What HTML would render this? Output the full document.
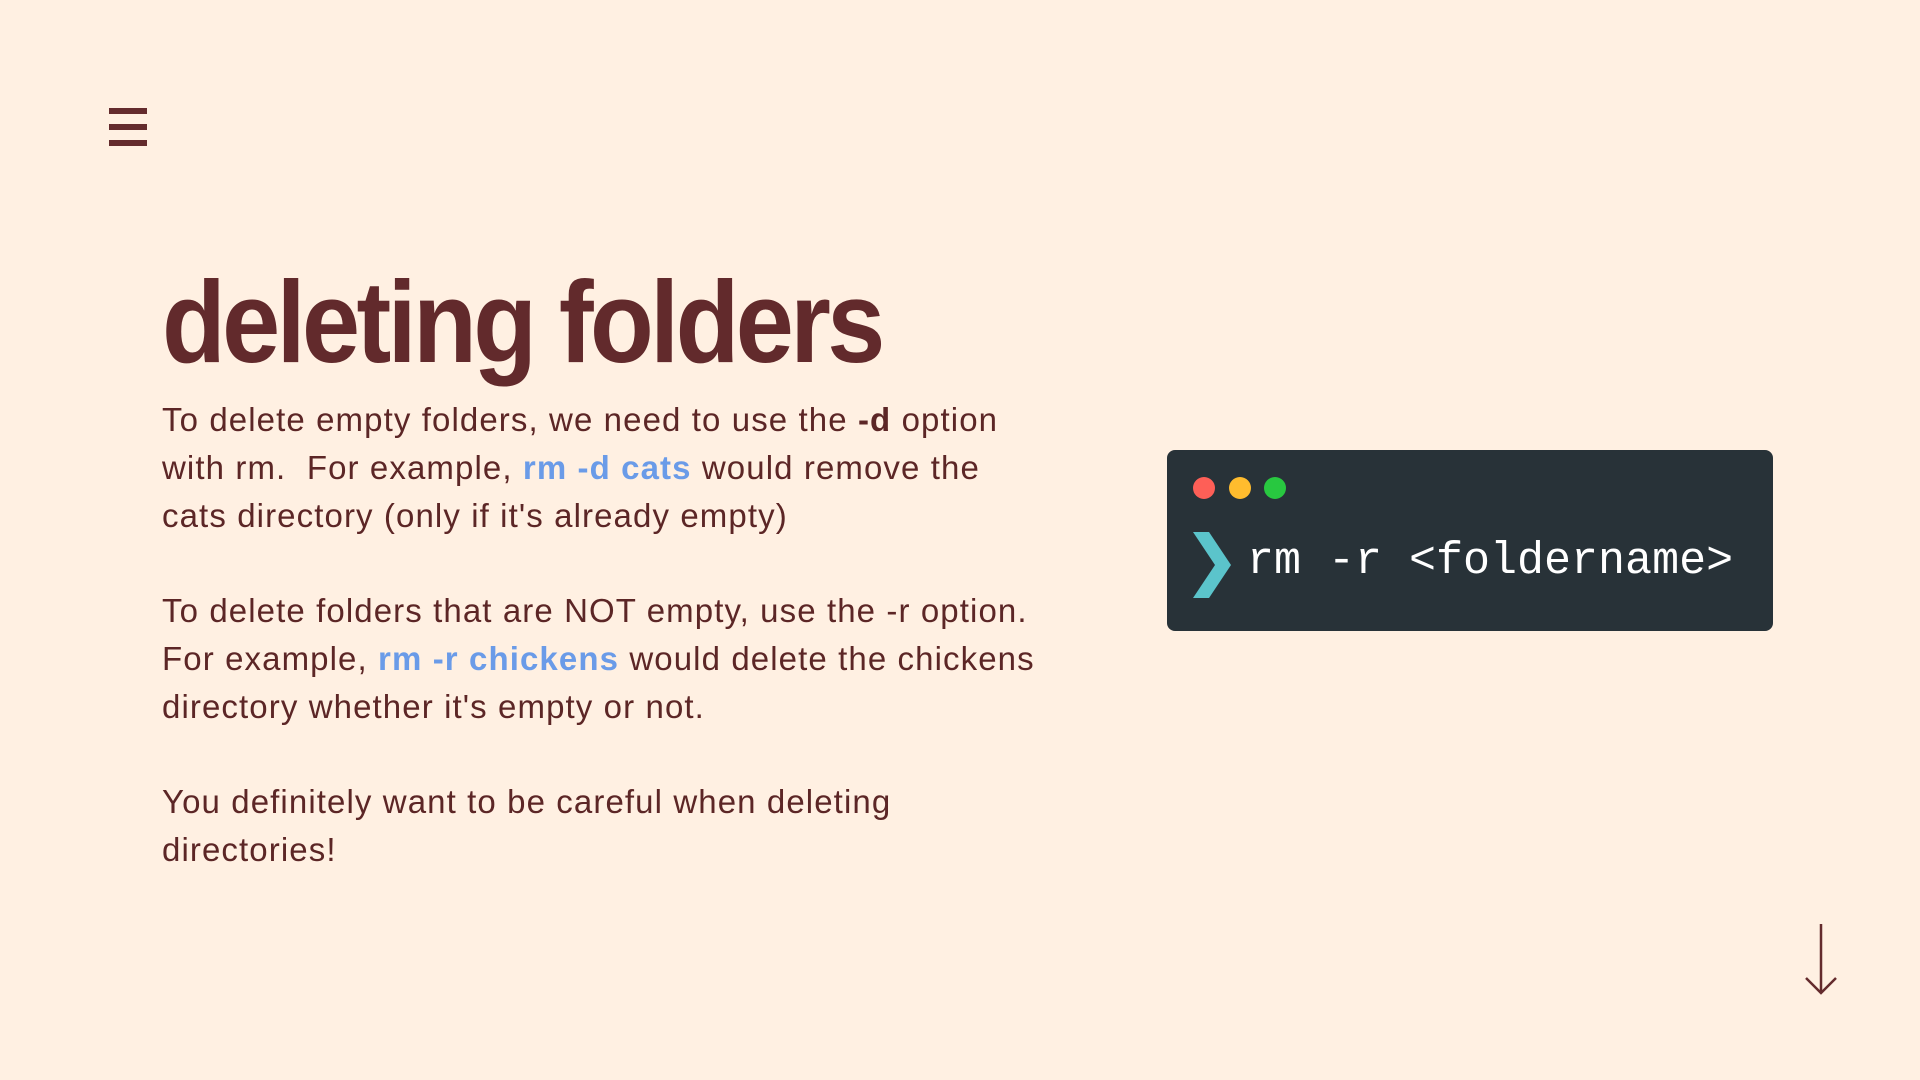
<!DOCTYPE html>
<html><head><meta charset="utf-8"><style>
html,body{margin:0;padding:0}
body{width:1920px;height:1080px;background:#fff0e2;position:relative;overflow:hidden;font-family:"Liberation Sans",sans-serif}
.hb{position:absolute;left:109px;width:38px;height:6px;background:#642b2d}
h1{position:absolute;left:162px;top:252px;margin:0;font-size:116px;font-weight:700;color:#622a2c;letter-spacing:-4px;line-height:140px;transform:scaleX(0.9);transform-origin:left top;white-space:nowrap}
.body{position:absolute;left:162px;top:396px;font-size:33px;letter-spacing:1.1px;line-height:47.8px;color:#5c2626;white-space:nowrap}
.b{color:#6a9be8;font-weight:700}
.term{position:absolute;left:1167px;top:450px;width:606px;height:181px;background:#283238;border-radius:8px}
.dot{position:absolute;top:27px;width:22px;height:22px;border-radius:50%}
.cmd{position:absolute;left:80px;top:82px;font-family:"Liberation Mono",monospace;font-size:45px;color:#fff;line-height:60px;white-space:nowrap}
</style></head><body>
<div class="hb" style="top:108px"></div>
<div class="hb" style="top:124px"></div>
<div class="hb" style="top:140px"></div>
<h1>deleting folders</h1>
<div class="body">
To delete empty folders, we need to use the <b style="color:#5c2626">-d</b> option<br>
with rm.&nbsp; For example, <span class="b">rm -d cats</span> would remove the<br>
cats directory (only if it's already empty)<br>
<br>
To delete folders that are NOT empty, use the -r option.<br>
For example, <span class="b">rm -r chickens</span> would delete the chickens<br>
directory whether it's empty or not.<br>
<br>
You definitely want to be careful when deleting<br>
directories!
</div>
<div class="term">
<div class="dot" style="left:26px;background:#fe5f57"></div>
<div class="dot" style="left:62px;background:#ffbc2e"></div>
<div class="dot" style="left:97px;background:#28c840"></div>
<svg style="position:absolute;left:26px;top:82px" width="40" height="68" viewBox="0 0 40 68"><polygon points="0,0 16,0 38,33 16,66 0,66 22,33" fill="#5bc4cb"/></svg>
<div class="cmd">rm -r &lt;foldername&gt;</div>
</div>
<svg style="position:absolute;left:1800px;top:920px" width="44" height="80" viewBox="0 0 44 80"><path d="M21 4V73M6 58L21 73L36 58" stroke="#642b2d" stroke-width="2.5" fill="none"/></svg>
</body></html>
